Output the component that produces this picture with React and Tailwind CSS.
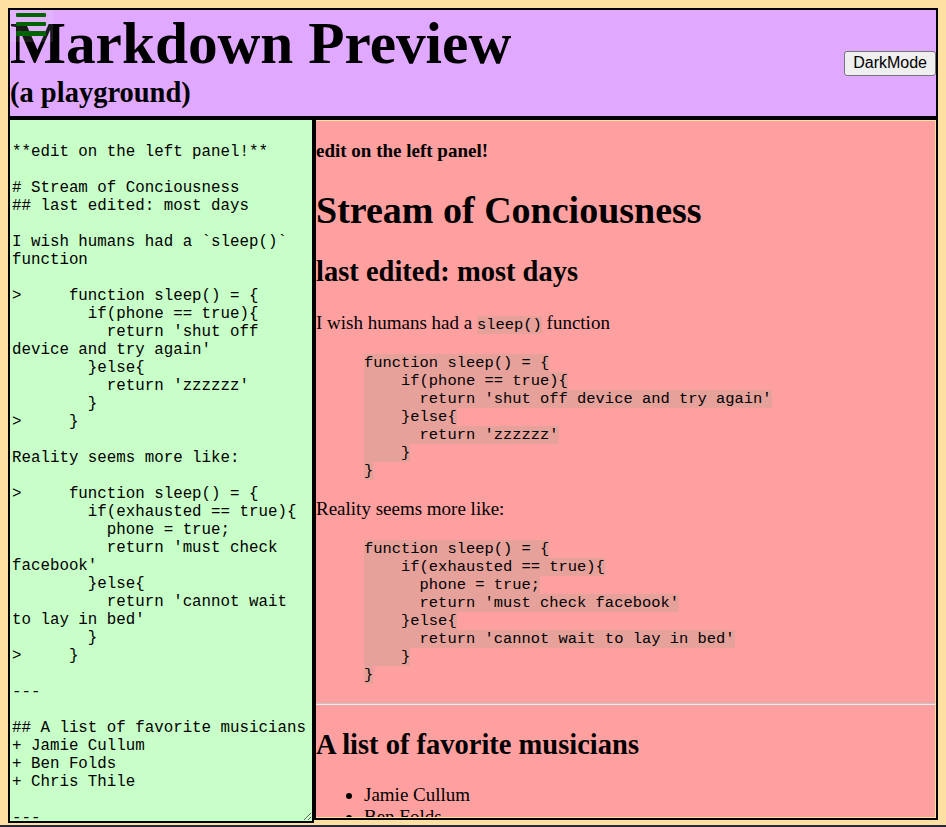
import React from "react";

const source = `
**edit on the left panel!**

# Stream of Conciousness
## last edited: most days

I wish humans had a \`sleep()\` function

>     function sleep() = {
        if(phone == true){
          return 'shut off device and try again'
        }else{
          return 'zzzzzz'
        }
>     }

Reality seems more like:

>     function sleep() = {
        if(exhausted == true){
          phone = true;
          return 'must check facebook'
        }else{
          return 'cannot wait to lay in bed'
        }
>     }

---

## A list of favorite musicians
+ Jamie Cullum
+ Ben Folds
+ Chris Thile

---
`;

const block1 = `function sleep() = {
    if(phone == true){
      return 'shut off device and try again'
    }else{
      return 'zzzzzz'
    }
}`;

const block2 = `function sleep() = {
    if(exhausted == true){
      phone = true;
      return 'must check facebook'
    }else{
      return 'cannot wait to lay in bed'
    }
}`;

function CodeBlock({ code, top }) {
  return (
    <blockquote className={"ml-[48px] " + top}>
      <pre className="font-['Liberation_Mono',monospace] text-[15.44px] leading-[18px]">
        <code className="bg-[#e6a19b]">{code}</code>
      </pre>
    </blockquote>
  );
}

export default function App() {
  return (
    <div className="h-screen overflow-hidden bg-[#ffe0a3] text-black">
      <div className="px-2 pt-2">
        <header className="relative flex h-[110px] items-center justify-between border-2 border-black bg-[#e0a9ff]">
          <div className="self-start font-['Liberation_Serif',serif] font-bold">
            <h1 className="text-[59.3px] leading-[66px]">Markdown Preview</h1>
            <h2 className="mt-[2px] text-[28.5px] leading-[30px]">(a playground)</h2>
          </div>
          <button className="absolute left-0 top-0 flex h-[32px] w-[43px] flex-col gap-[5px] bg-white/10 pl-[6px] pt-[3px]">
            <span className="block h-[4px] w-[30px] rounded-[1px] bg-[#006400]" />
            <span className="block h-[4px] w-[30px] rounded-[1px] bg-[#006400]" />
            <span className="block h-[5px] w-[30px] rounded-[1px] bg-[#006400]" />
          </button>
          <button className="h-[25px] rounded-[3px] border border-[#767676] bg-[#efefef] px-2 font-['Liberation_Sans',Arial,sans-serif] text-[16px] leading-[18px]">
            DarkMode
          </button>
        </header>

        <div className="flex items-start">
          <textarea
            defaultValue={source}
            spellCheck={false}
            className="h-[705px] w-[306px] shrink-0 overflow-hidden border-2 border-black bg-[#c8ffc8] px-[2px] pt-[5px] font-['Liberation_Mono',monospace] text-[15.8px] leading-[18px] outline-none"
          />
          <div className="h-[702px] flex-1 border-2 border-black bg-[#ffe0a3]">
            <div className="mb-px mr-px mt-px h-[calc(100%-2px)] overflow-hidden bg-[#ffa0a0] font-['Liberation_Serif',serif] text-[19px] leading-[22px]">
              <p className="mt-[19px] font-bold">edit on the left panel!</p>
              <h1 className="mt-[25.5px] text-[38px] font-bold leading-[44px]">Stream of Conciousness</h1>
              <h2 className="mt-[23.5px] text-[28.5px] font-bold leading-[33px]">last edited: most days</h2>
              <p className="mt-[23.7px]">
                I wish humans had a{" "}
                <code className="bg-[#e6a19b] font-['Liberation_Mono',monospace] text-[15.44px]">sleep()</code>{" "}
                function
              </p>
              <CodeBlock code={block1} top="mt-[18px]" />
              <p className="mt-[18px]">Reality seems more like:</p>
              <CodeBlock code={block2} top="mt-[20px]" />
              <div className="mt-[19px] border-b border-t border-b-[#ececec] border-t-[#c4c4c4]" />
              <h2 className="mt-[23.7px] text-[28.5px] font-bold leading-[33px]">A list of favorite musicians</h2>
              <ul className="mt-[22.7px] list-disc pl-[48px]">
                <li>Jamie Cullum</li>
                <li>Ben Folds</li>
                <li>Chris Thile</li>
              </ul>
            </div>
          </div>
        </div>
      </div>
      <div className="mt-[2px] h-[40px] bg-[#262b33]" />
    </div>
  );
}
